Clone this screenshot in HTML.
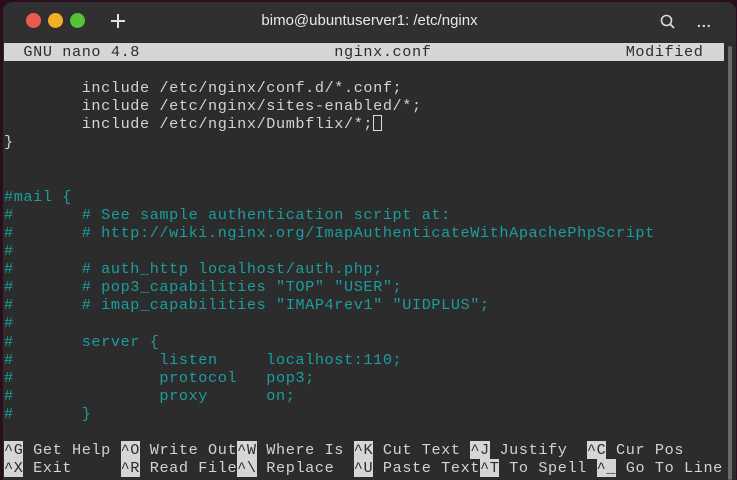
<!DOCTYPE html>
<html><head><meta charset="utf-8"><style>
html,body{margin:0;padding:0;width:737px;height:480px;overflow:hidden;background:#2a0e1f}
.win{position:absolute;left:3px;top:2px;width:733px;height:478px;background:#2c2c2c;border-radius:10px 10px 0 0;overflow:hidden}
.tb{position:absolute;left:0;top:0;width:733px;height:40px;background:#303030}
.dot{position:absolute;top:11px;width:15px;height:15px;border-radius:50%}
.title{position:absolute;left:0;width:733px;top:10px;text-align:center;color:#e8e8e8;font:15px "Liberation Sans",sans-serif}
.term{position:absolute;left:1px;top:41px;font-family:"Liberation Mono",monospace;font-size:15.2px;letter-spacing:0.6px;line-height:18.1px;color:#d3d3d3}
.row{height:18.1px;white-space:pre}
.c{color:#1a9ea0}
.inv{background:#d6d6d6;color:#2c2c2c}
.stat{background:#d6d6d6;color:#2c2c2c;width:720px}
.sb{position:absolute;left:725px;top:44px;width:4px;height:434px;background:#6a6a6a;border-radius:2px}
.cur{display:inline-block;width:9px;height:16px;border:1px solid #ddd;vertical-align:-3px;box-sizing:border-box}
</style></head><body>
<div class="win">
<div class="tb">
<div class="dot" style="left:23px;background:#ed5a50"></div>
<div class="dot" style="left:45px;background:#f2b022"></div>
<div class="dot" style="left:67px;background:#57c13a"></div>
<div style="position:absolute;left:108px;top:18px;width:14px;height:2px;background:#e0e0e0"></div>
<div style="position:absolute;left:114px;top:12px;width:2px;height:14px;background:#e0e0e0"></div>
<div class="title">bimo@ubuntuserver1: /etc/nginx</div>
<svg style="position:absolute;left:657px;top:12px" width="16" height="16"><circle cx="6.5" cy="6.5" r="5" stroke="#ddd" stroke-width="1.6" fill="none"/><line x1="10" y1="10" x2="14" y2="14" stroke="#ddd" stroke-width="1.8"/></svg>
<div style="position:absolute;left:694px;top:18px;color:#ddd;font:bold 14px 'Liberation Sans',sans-serif;letter-spacing:1px;line-height:4px">...</div>
</div>
<div class="sb"></div>
<div class="term">
<div class="row stat">  GNU nano 4.8                    nginx.conf                    Modified</div>
<div class="row"> </div>
<div class="row">        include /etc/nginx/conf.d/*.conf;</div>
<div class="row">        include /etc/nginx/sites-enabled/*;</div>
<div class="row">        include /etc/nginx/Dumbflix/*;<span class="cur"></span></div>
<div class="row">}</div>
<div class="row"> </div>
<div class="row"> </div>
<div class="row c">#mail {</div>
<div class="row c">#       # See sample authentication script at:</div>
<div class="row c">#       # http://wiki.nginx.org/ImapAuthenticateWithApachePhpScript</div>
<div class="row c">#</div>
<div class="row c">#       # auth_http localhost/auth.php;</div>
<div class="row c">#       # pop3_capabilities "TOP" "USER";</div>
<div class="row c">#       # imap_capabilities "IMAP4rev1" "UIDPLUS";</div>
<div class="row c">#</div>
<div class="row c">#       server {</div>
<div class="row c">#               listen     localhost:110;</div>
<div class="row c">#               protocol   pop3;</div>
<div class="row c">#               proxy      on;</div>
<div class="row c">#       }</div>
<div class="row"> </div>
<div class="row"><span class="inv">^G</span> Get Help <span class="inv">^O</span> Write Out<span class="inv">^W</span> Where Is <span class="inv">^K</span> Cut Text <span class="inv">^J</span> Justify  <span class="inv">^C</span> Cur Pos</div>
<div class="row"><span class="inv">^X</span> Exit     <span class="inv">^R</span> Read File<span class="inv">^\</span> Replace  <span class="inv">^U</span> Paste Text<span class="inv">^T</span> To Spell <span class="inv">^_</span> Go To Line</div>
</div>
</div>
</body></html>
